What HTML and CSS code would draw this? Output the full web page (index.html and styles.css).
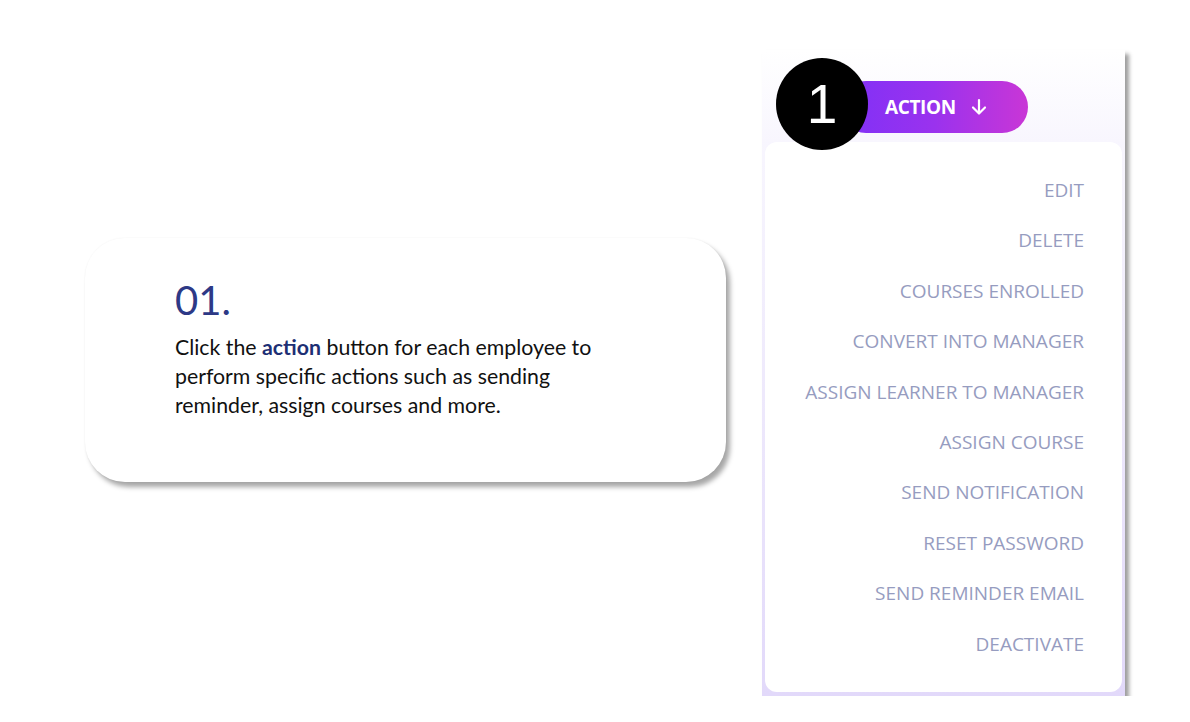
FILE: index.html
```
<!DOCTYPE html>
<html lang="en">
<head>
    <meta charset="UTF-8">
    <meta name="viewport" content="width=device-width, initial-scale=1.0">
    <title>Employee actions</title>
    <link rel="stylesheet" href="styles.css">
</head>
<body>
    <div class="stage">
        <div class="tipcard">
            <div class="tipnum">01.</div>
            <p class="tiptext">Click the <span class="hl">action</span> button for each employee to perform specific actions such as sending reminder, assign courses and more.</p>
        </div>

        <div class="shot">
            <div class="shothead">
                <div class="step">1</div>
                <button class="actionbtn">
                    <span>ACTION</span>
                    <svg width="18" height="18" viewBox="0 0 18 18" fill="none" stroke="#fff" stroke-width="2.2" stroke-linecap="round" stroke-linejoin="round">
                        <path d="M9 2v13"/>
                        <path d="M3 9.5l6 6 6-6"/>
                    </svg>
                </button>
            </div>
            <ul class="menu">
                <li>EDIT</li>
                <li>DELETE</li>
                <li>COURSES ENROLLED</li>
                <li>CONVERT INTO MANAGER</li>
                <li>ASSIGN LEARNER TO MANAGER</li>
                <li>ASSIGN COURSE</li>
                <li>SEND NOTIFICATION</li>
                <li>RESET PASSWORD</li>
                <li>SEND REMINDER EMAIL</li>
                <li>DEACTIVATE</li>
            </ul>
        </div>
    </div>
</body>
</html>
```
FILE: styles.css
```
body {
    margin: 0;
    background: #fff;
    font-family: "Open Sans", sans-serif;
}
.stage {
    display: flex;
    align-items: flex-start;
    gap: 36px;
    padding: 50px 0 0 85px;
}

/* left explanation card */
.tipcard {
    box-sizing: border-box;
    width: 641px;
    height: 244px;
    margin-top: 188px;
    padding: 38px 60px 0 90px;
    background: #fff;
    border-radius: 40px;
    box-shadow: 4px 5px 5px rgba(0, 0, 0, 0.35), 0 0 2px rgba(0, 0, 0, 0.06);
}
.tipnum {
    font-family: Lato, sans-serif;
    font-size: 40px;
    line-height: 48px;
    color: #2d3986;
}
.tiptext {
    width: 440px;
    margin: 9px 0 0;
    font-family: Lato, sans-serif;
    font-size: 21.3px;
    line-height: 29px;
    color: #111;
}
.tiptext .hl {
    font-weight: 700;
    color: #1d2f74;
}

/* screenshot of the action menu */
.shot {
    width: 363px;
    height: 646px;
    display: flex;
    flex-direction: column;
    background: linear-gradient(to bottom, #fbfaff, #f4f1fd 30%, #e2d9fa);
    box-shadow: 4px 4px 4px rgba(0, 0, 0, 0.38);
}
.shothead {
    height: 92px;
    display: flex;
    align-items: flex-start;
    padding: 8px 0 0 14px;
    box-sizing: border-box;
    background: linear-gradient(to bottom, #fff, #f8f6fe);
}
.step {
    position: relative;
    z-index: 2;
    width: 92px;
    height: 92px;
    flex: none;
    border-radius: 50%;
    background: #000;
    color: #fff;
    font-family: "Liberation Sans", sans-serif;
    font-size: 55px;
    line-height: 92px;
    text-align: center;
}
.actionbtn {
    margin: 23px 0 0 -28px;
    width: 188px;
    height: 52px;
    border: none;
    border-radius: 26px;
    padding: 0 0 0 45px;
    display: flex;
    align-items: center;
    justify-content: flex-start;
    gap: 14px;
    background: linear-gradient(to right, #7f31f7, #9a32ee 50%, #c936d6);
    color: #fff;
    font-family: "Open Sans", sans-serif;
    font-weight: 700;
    font-size: 19px;
    letter-spacing: -0.4px;
}
.menu {
    flex: 1;
    list-style: none;
    margin: 0 3px 4px 3px;
    padding: 23px 38px 0 0;
    background: #fff;
    border-radius: 12px;
    text-align: right;
}
.menu li {
    height: 50.4px;
    line-height: 50px;
    font-size: 19px;
    color: #969cc0;
}
```
